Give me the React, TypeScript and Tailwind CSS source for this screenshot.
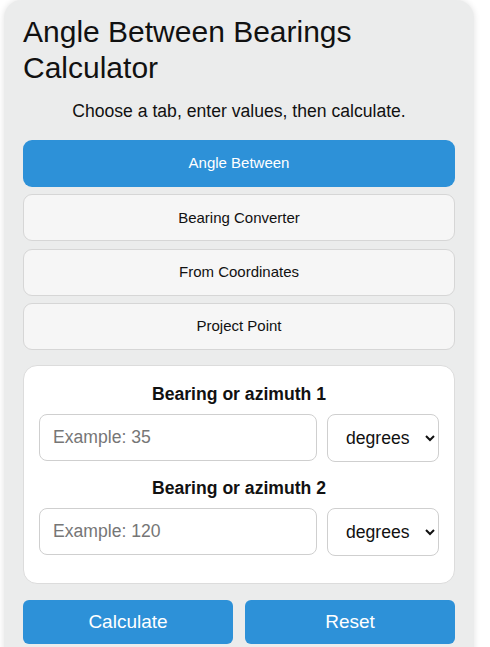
import React from "react";

export default function App() {
  const tabs = ["Angle Between", "Bearing Converter", "From Coordinates", "Project Point"];
  return (
    <div className="min-h-[647px] bg-white pl-[4px] overflow-hidden" style={{ fontFamily: '"Liberation Sans", Arial, sans-serif' }}>
      <div className="w-[470px] min-h-[660px] bg-[#ebecec] rounded-t-[18px] shadow-[0_0_6px_rgba(0,0,0,0.12)] px-[19px] pt-[14px] text-[#111]">
        <h1 className="text-[30px] leading-[36px] font-normal text-[#111]">Angle Between Bearings Calculator</h1>
        <p className="mt-[15px] text-center text-[17.6px] leading-[20px] text-[#111]">Choose a tab, enter values, then calculate.</p>
        <div className="mt-[19px] flex flex-col gap-[7.4px]">
          {tabs.map((t, i) => (
            <button
              key={t}
              className={
                i === 0
                  ? "h-[47px] rounded-[9px] bg-[#2d91d8] text-white text-[15px] flex items-center justify-center"
                  : "h-[47px] rounded-[9px] bg-[#f6f6f6] border border-[#d6d6d6] text-[#111] text-[15px] flex items-center justify-center"
              }
            >
              {t}
            </button>
          ))}
        </div>
        <div className="mt-[15px] bg-white border border-[#dcdcdc] rounded-[14px] px-[15px] pt-[18px] pb-[27px]">
          {[
            { label: "Bearing or azimuth 1", ph: "Example: 35" },
            { label: "Bearing or azimuth 2", ph: "Example: 120" },
          ].map((g, i) => (
            <div key={g.label} className={i === 0 ? "" : "mt-[16px]"}>
              <div className="text-center font-bold text-[17.6px] leading-[20px] text-[#111]">{g.label}</div>
              <div className="mt-[10px] flex gap-[10px] items-start">
                <input
                  type="text"
                  placeholder={g.ph}
                  className="w-[278px] h-[47px] rounded-[8px] border border-[#cfcfcf] bg-white px-[13px] text-[17.6px] text-[#111] placeholder:text-[#767676] outline-none"
                />
                <select className="w-[112px] h-[48px] rounded-[8px] border border-[#cfcfcf] bg-white pl-[14px] pr-[8px] text-[17.6px] text-[#111] outline-none">
                  <option>degrees</option>
                  <option>radians</option>
                </select>
              </div>
            </div>
          ))}
        </div>
        <div className="mt-[16px] flex gap-[12px]">
          <button className="flex-1 h-[44px] rounded-[6px] bg-[#2d91d8] text-white text-[19px]">Calculate</button>
          <button className="flex-1 h-[44px] rounded-[6px] bg-[#2d91d8] text-white text-[19px]">Reset</button>
        </div>
      </div>
    </div>
  );
}
